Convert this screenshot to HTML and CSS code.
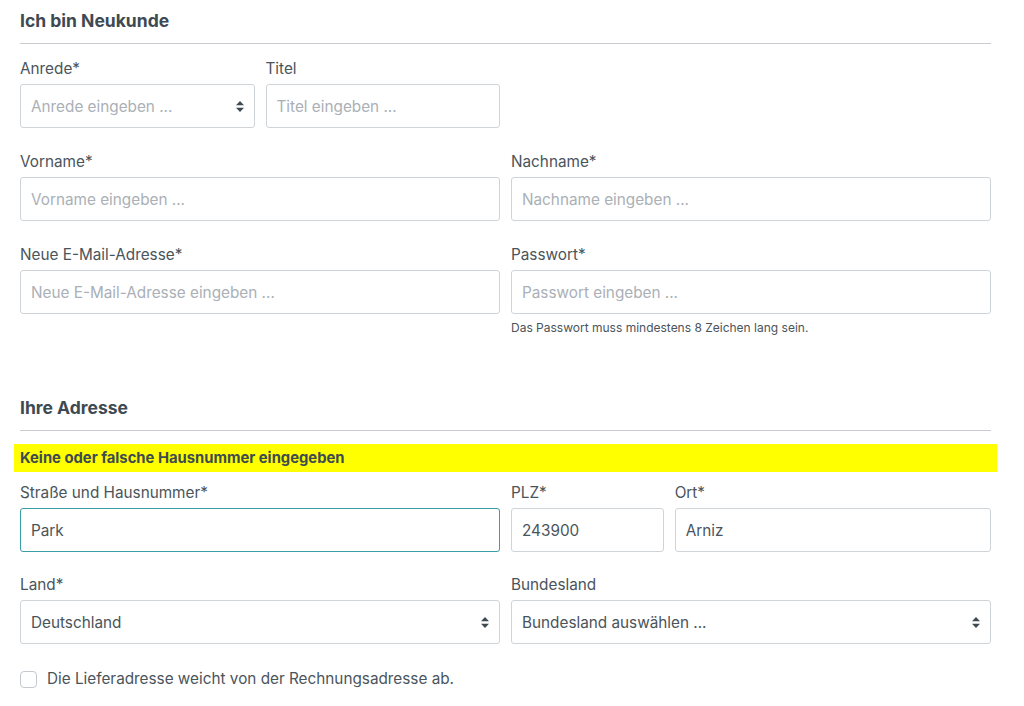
FILE: index.html
```html
<!DOCTYPE html>
<html lang="de">
<head>
<meta charset="utf-8">
<title>Registrierung</title>
<link rel="stylesheet" href="styles.css">
</head>
<body>
<div class="page">
  <h2 class="section-title">Ich bin Neukunde</h2>
  <div class="row">
    <div class="field span-3">
      <label class="label">Anrede*</label>
      <div class="select-wrap">
        <select class="control select placeholder"><option>Anrede eingeben ...</option></select>
        <svg class="arrows" width="8" height="11" viewBox="0 0 8 11"><path d="M4 0 L8 4.3 H0 Z M4 11 L8 6.7 H0 Z" fill="#3e4a52"/></svg>
      </div>
    </div>
    <div class="field span-3">
      <label class="label">Titel</label>
      <input class="control" type="text" placeholder="Titel eingeben ...">
    </div>
  </div>
  <div class="row">
    <div class="field span-6">
      <label class="label">Vorname*</label>
      <input class="control" type="text" placeholder="Vorname eingeben ...">
    </div>
    <div class="field span-6">
      <label class="label">Nachname*</label>
      <input class="control" type="text" placeholder="Nachname eingeben ...">
    </div>
  </div>
  <div class="row">
    <div class="field span-6">
      <label class="label">Neue E-Mail-Adresse*</label>
      <input class="control" type="text" placeholder="Neue E-Mail-Adresse eingeben ...">
    </div>
    <div class="field span-6">
      <label class="label">Passwort*</label>
      <input class="control" type="password" placeholder="Passwort eingeben ...">
      <div class="help">Das Passwort muss mindestens 8 Zeichen lang sein.</div>
    </div>
  </div>

  <h2 class="section-title second">Ihre Adresse</h2>
  <div class="alert">Keine oder falsche Hausnummer eingegeben</div>
  <div class="row tight">
    <div class="field span-6">
      <label class="label">Straße und Hausnummer*</label>
      <input class="control focus" type="text" value="Park">
    </div>
    <div class="field span-2">
      <label class="label">PLZ*</label>
      <input class="control" type="text" value="243900">
    </div>
    <div class="field span-4">
      <label class="label">Ort*</label>
      <input class="control" type="text" value="Arniz">
    </div>
  </div>
  <div class="row">
    <div class="field span-6">
      <label class="label">Land*</label>
      <div class="select-wrap">
        <select class="control select"><option>Deutschland</option></select>
        <svg class="arrows" width="8" height="11" viewBox="0 0 8 11"><path d="M4 0 L8 4.3 H0 Z M4 11 L8 6.7 H0 Z" fill="#3e4a52"/></svg>
      </div>
    </div>
    <div class="field span-6">
      <label class="label">Bundesland</label>
      <div class="select-wrap">
        <select class="control select"><option>Bundesland auswählen ...</option></select>
        <svg class="arrows" width="8" height="11" viewBox="0 0 8 11"><path d="M4 0 L8 4.3 H0 Z M4 11 L8 6.7 H0 Z" fill="#3e4a52"/></svg>
      </div>
    </div>
  </div>
  <label class="check">
    <span class="box"></span>
    <span>Die Lieferadresse weicht von der Rechnungsadresse ab.</span>
  </label>
</div>
</body>
</html>
```
FILE: styles.css
```css
* { box-sizing: border-box; }
html, body { margin: 0; padding: 0; background: #fff; }
body {
  font-family: Inter, "Noto Sans", "Liberation Sans", sans-serif;
  color: #4a545b;
  font-size: 15.3px;
}
.page {
  width: 971px;
  margin-left: 20px;
}
.section-title {
  margin: 0;
  padding-top: 9px;
  padding-bottom: 10px;
  line-height: 24px;
  font-size: 17.5px;
  font-weight: 700;
  color: #3e4a52;
  border-bottom: 1px solid #c9cdd1;
  margin-bottom: 14px;
}
.section-title.second {
  margin-top: 51px;
  margin-bottom: 13px;
}
.row {
  display: grid;
  grid-template-columns: repeat(12, 1fr);
  column-gap: 11px;
  margin-bottom: 23px;
}
.row.tight { margin-bottom: 22px; }
.field { display: flex; flex-direction: column; }
.span-2 { grid-column: span 2; }
.span-3 { grid-column: span 3; }
.span-4 { grid-column: span 4; }
.span-6 { grid-column: span 6; }
.label {
  line-height: 20px;
  padding-top: 1px;
  font-size: 15.3px;
  margin-bottom: 5px;
  color: #4a545b;
}
.control {
  display: block;
  width: 100%;
  height: 44px;
  border: 1px solid #cfd4d8;
  border-radius: 3px;
  padding: 0 10px;
  font-family: inherit;
  font-size: 15.3px;
  color: #4a545b;
  background: #fff;
  outline: none;
}
.control::placeholder { color: #aab0b6; opacity: 1; }
.control.focus { border-color: #3a9ea6; }
.select-wrap { position: relative; }
.select {
  appearance: none;
  -webkit-appearance: none;
  padding-right: 30px;
}
.select.placeholder { color: #aab0b6; }
.arrows {
  position: absolute;
  right: 11px;
  top: 17px;
  pointer-events: none;
}
.help {
  margin-top: 6px;
  font-size: 12px;
  line-height: 16px;
  color: #4a545b;
}
.alert {
  margin: 0 -6px 10px;
  padding: 0 6px;
  height: 28px;
  line-height: 28px;
  background: #ffff00;
  font-weight: 700;
  font-size: 14.8px;
  color: #3e4a52;
}
.check {
  display: flex;
  align-items: center;
  gap: 10px;
  padding-top: 2px;
  font-size: 15.3px;
  line-height: 20px;
  color: #4a545b;
}
.box {
  width: 17px;
  height: 17px;
  border: 1px solid #c4cacf;
  border-radius: 4px;
  background: #fff;
}
```
